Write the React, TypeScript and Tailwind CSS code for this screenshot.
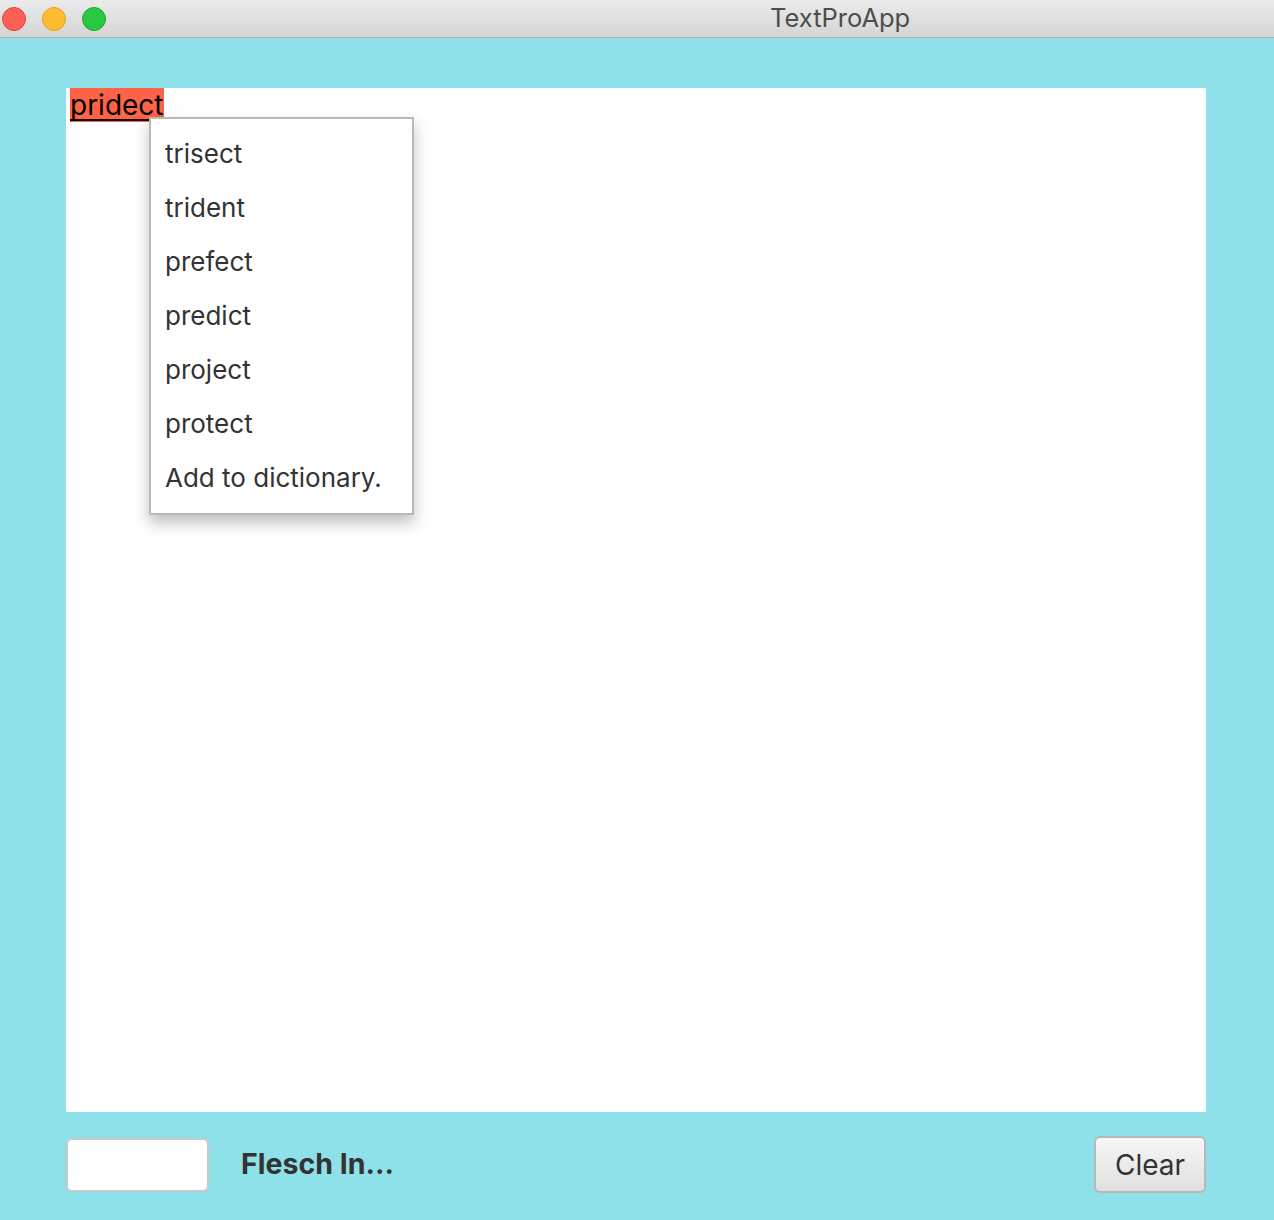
import React from 'react';

const suggestions = ['trisect', 'trident', 'prefect', 'predict', 'project', 'protect', 'Add to dictionary.'];

export default function App() {
  return (
    <div className="flex h-[1220px] w-[1274px] flex-col overflow-hidden bg-[#8ee1e9] font-['Inter','Liberation_Sans',Arial,sans-serif]">
      {/* title bar */}
      <div className="relative flex h-[38px] shrink-0 items-center border-b border-[#b3b3b3] bg-gradient-to-b from-[#ebebeb] to-[#d5d5d5]">
        <div className="flex items-center gap-[16px] pl-[2px]">
          <span className="h-[24px] w-[24px] rounded-full border border-[#e0443e] bg-[#fe5f57]" />
          <span className="h-[24px] w-[24px] rounded-full border border-[#dea123] bg-[#febc2e]" />
          <span className="h-[24px] w-[24px] rounded-full border border-[#1aab29] bg-[#28c840]" />
        </div>
        <div className="ml-[664px] text-[25.5px] text-[#4d4d4d]">TextProApp</div>
      </div>

      <div className="flex flex-1 flex-col pl-[66px] pr-[68px] pt-[50px]">
        {/* text area */}
        <div className="relative h-[1024px] w-[1140px] bg-white">
          <div className="pl-[4px]">
            <span className="inline-block h-[34px] bg-[#ff6347] text-[28px] leading-[34px] text-black">
              <span className="inline-block h-[32px] border-b-2 border-black leading-[32px]">pridect</span>
            </span>
          </div>

          {/* context menu */}
          <div className="absolute left-[83px] top-[29px] w-[265px] border-2 border-[#b9b9b9] bg-white py-[8px] shadow-[0_8px_14px_rgba(0,0,0,0.25)]">
            {suggestions.map((s) => (
              <div key={s} className="h-[54px] pl-[14px] text-[26px] leading-[54px] text-[#333]">
                {s}
              </div>
            ))}
          </div>
        </div>

        {/* bottom bar */}
        <div className="flex items-center pt-[24px]">
          <div className="h-[54px] w-[143px] rounded-[6px] border-2 border-[#c9c9c9] bg-white" />
          <div className="ml-[32px] text-[28.5px] font-bold text-[#333]">Flesch In...</div>
          <button className="ml-auto h-[57px] w-[112px] rounded-[6px] border-2 border-[#b8b8b8] bg-gradient-to-b from-[#f7f7f7] to-[#e0e0e0] text-[28px] text-[#333]">
            Clear
          </button>
        </div>
      </div>
    </div>
  );
}
